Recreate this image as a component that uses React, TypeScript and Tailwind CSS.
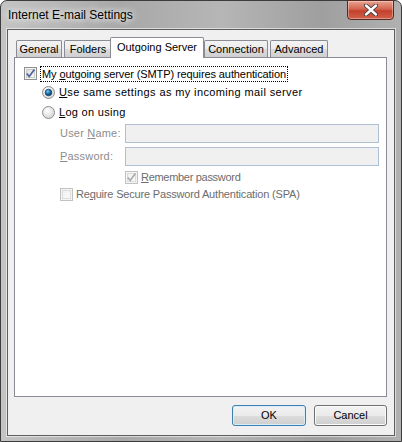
const font = "font-['Liberation_Sans',Arial,sans-serif]";

function CheckBox({ checked, disabled }: { checked?: boolean; disabled?: boolean }) {
  const outer = disabled ? "#c2c2c2" : "#8e8f8f";
  const mark = disabled ? "#a8a8a8" : "#4a5f97";
  return (
    <svg width="13" height="13" viewBox="0 0 13 13" className="shrink-0">
      <defs>
        <linearGradient id={disabled ? "cbd" : "cbe"} x1="0" y1="0" x2="1" y2="1">
          <stop offset="0" stopColor={disabled ? "#f0f0f0" : "#dadcde"} />
          <stop offset="1" stopColor={disabled ? "#fbfbfb" : "#fafafa"} />
        </linearGradient>
      </defs>
      <rect x="0.5" y="0.5" width="12" height="12" fill="#f4f4f4" stroke={outer} />
      <rect x="2.5" y="2.5" width="8" height="8" fill={`url(#${disabled ? "cbd" : "cbe"})`} stroke={disabled ? "#dcdcdc" : "#c6c9cd"} />
      {checked && (
        <path d="M2.8 6.6 L5.2 9.4 L10.4 2.6" fill="none" stroke={mark} strokeWidth="1.6" />
      )}
    </svg>
  );
}

function Radio({ checked }: { checked?: boolean }) {
  return (
    <svg width="13" height="13" viewBox="0 0 13 13" className="shrink-0">
      <defs>
        <radialGradient id="rb" cx="0.4" cy="0.35" r="0.7">
          <stop offset="0" stopColor="#ffffff" />
          <stop offset="1" stopColor="#d4d4d4" />
        </radialGradient>
        <radialGradient id="rdot" cx="0.4" cy="0.35" r="0.6">
          <stop offset="0" stopColor="#8fd3f7" />
          <stop offset="0.5" stopColor="#1c78b4" />
          <stop offset="1" stopColor="#0d3f6b" />
        </radialGradient>
      </defs>
      <circle cx="6.5" cy="6.5" r="6" fill="url(#rb)" stroke="#8c8c8c" />
      {checked && <circle cx="6.5" cy="6.5" r="3.3" fill="url(#rdot)" stroke="#20486e" strokeWidth="0.8" />}
    </svg>
  );
}

const tabBase =
  "h-[17px] border border-b-0 border-[#898c95] bg-[linear-gradient(#f3f3f3,#ebebeb_50%,#dddddd_51%,#cfcfcf)] text-[11px] leading-[15px] text-black flex items-center justify-center rounded-t-[2px]";

export default function App() {
  return (
    <div className={`w-[402px] h-[442px] flex flex-col rounded-t-[7px] border border-[#3c3c3c] bg-[linear-gradient(90deg,#c4c4c4,#a8a8a8_30%,#b6b6b6_55%,#9f9f9f_80%,#b0b0b0)] ${font}`}>
      {/* title bar */}
      <div className="h-[28px] flex items-start justify-between">
        <div className="pl-[7px] pt-[5px] text-[12px] leading-[18px] text-black [text-shadow:0_0_6px_#ffffff,0_0_10px_#ffffff]">
          Internet E-mail Settings
        </div>
        <div className="mr-[7px] -mt-[1px] w-[47px] h-[20px] rounded-b-[4px] border border-[#5a2a22] bg-[linear-gradient(#e8a391,#d4644f_45%,#c2412b_55%,#d2604a)] shadow-[inset_0_0_0_1px_rgba(255,255,255,0.35)] flex items-center justify-center">
          <svg width="14" height="12" viewBox="0 0 14 12">
            <path d="M2 1.5 L12 10.5 M12 1.5 L2 10.5" stroke="#3a3a3a" strokeWidth="4.2" strokeLinecap="round" />
            <path d="M2 1.5 L12 10.5 M12 1.5 L2 10.5" stroke="#ffffff" strokeWidth="2.4" strokeLinecap="round" />
          </svg>
        </div>
      </div>

      {/* client area */}
      <div className="mx-[6px] h-[407px] border border-[#5e5e5e] bg-[#f0f0f0] shadow-[0_0_0_1px_rgba(255,255,255,0.55)] flex flex-col text-[11px] text-black">
        {/* tabs */}
        <div className="mt-[7px] ml-[6px] h-[20px] flex items-end relative z-10">
          <div className={`${tabBase} ml-[2px] w-[46px]`}>General</div>
          <div className={`${tabBase} ml-[2px] w-[48px]`}>Folders</div>
          <div className="-ml-[2px] w-[94px] h-[21px] -mb-[1px] border border-b-0 border-[#898c95] bg-white rounded-t-[2px] flex items-start justify-center pt-[2px] leading-[15px]">
            Outgoing Server
          </div>
          <div className={`${tabBase} w-[64px]`}>Connection</div>
          <div className={`${tabBase} ml-[2px] w-[58px]`}>Advanced</div>
        </div>

        {/* tab panel */}
        <div className="ml-[6px] mr-[7px] h-[340px] border border-[#898c95] bg-white flex flex-col">
          <div className="mt-[7px] h-[17px] pl-[9px] flex items-center">
            <CheckBox checked />
            <span className="ml-[3px] px-[1px] h-[16px] leading-[14px] tracking-[-0.1px] border border-dotted border-black">
              My <u>o</u>utgoing server (SMTP) requires authentication
            </span>
          </div>
          <div className="mt-[2px] h-[17px] pl-[27px] flex items-center">
            <Radio checked />
            <span className="ml-[4px] tracking-[0.38px]">
              <u>U</u>se same settings as my incoming mail server
            </span>
          </div>
          <div className="mt-[3px] h-[17px] pl-[27px] flex items-center">
            <Radio />
            <span className="ml-[4px] tracking-[0.3px]">
              <u>L</u>og on using
            </span>
          </div>
          <div className="mt-[3px] h-[19px] pl-[45px] pr-[7px] flex items-center">
            <span className="w-[65px] text-[#8d8d8d] tracking-[0.2px]">
              User <u>N</u>ame:
            </span>
            <div className="flex-1 h-[19px] border border-[#aebfd6] bg-[#f0f0f0]" />
          </div>
          <div className="mt-[4px] h-[19px] pl-[45px] pr-[7px] flex items-center">
            <span className="w-[65px] text-[#8d8d8d] tracking-[0.2px]">
              <u>P</u>assword:
            </span>
            <div className="flex-1 h-[19px] border border-[#aebfd6] bg-[#f0f0f0]" />
          </div>
          <div className="mt-[3px] h-[17px] pl-[110px] flex items-center">
            <CheckBox checked disabled />
            <span className="ml-[3px] text-[#6d6d6d] tracking-[-0.3px]">
              <u>R</u>emember password
            </span>
          </div>
          <div className="h-[17px] pl-[45px] flex items-center">
            <CheckBox disabled />
            <span className="ml-[3px] text-[#6d6d6d] tracking-[-0.18px]">
              Re<u>q</u>uire Secure Password Authentication (SPA)
            </span>
          </div>
        </div>

        {/* buttons */}
        <div className="mt-[8px] mr-[7px] flex justify-end gap-[8px]">
          <button className="w-[74px] h-[21px] rounded-[3px] border border-[#3c7fb1] bg-[linear-gradient(#f2f2f2,#ebebeb_50%,#dddddd_51%,#cfcfcf)] shadow-[inset_0_0_0_1px_#d8eefa] text-[11px] leading-[15px]">
            OK
          </button>
          <button className="w-[73px] h-[21px] rounded-[3px] border border-[#707070] bg-[linear-gradient(#f2f2f2,#ebebeb_50%,#dddddd_51%,#cfcfcf)] shadow-[inset_0_0_0_1px_#fbfbfb] text-[11px] leading-[15px]">
            Cancel
          </button>
        </div>
      </div>
    </div>
  );
}
